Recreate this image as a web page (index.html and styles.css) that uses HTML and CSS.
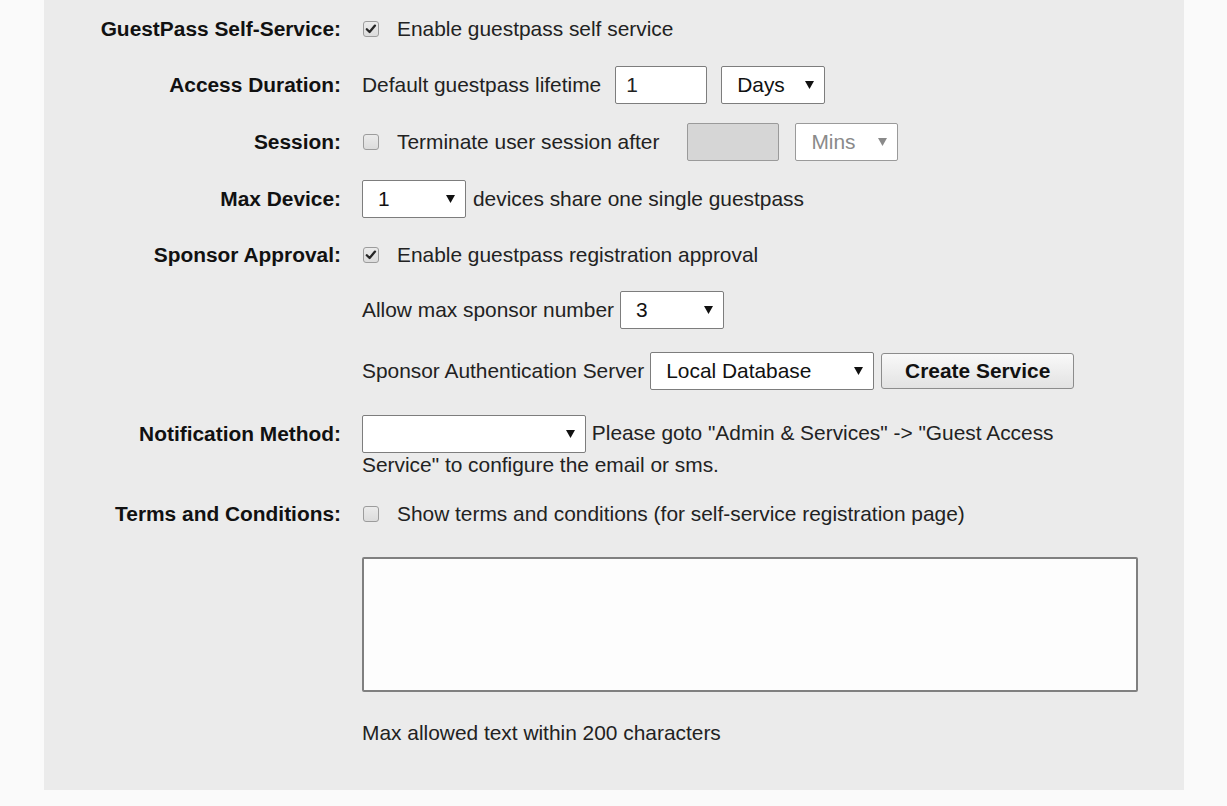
FILE: index.html
```html
<!DOCTYPE html>
<html>
<head>
<meta charset="utf-8">
<link rel="stylesheet" href="styles.css">
</head>
<body>
<div class="panel">
  <div class="row r1">
    <div class="label">GuestPass Self-Service:</div>
    <div class="ctrl">
      <span class="cb checked"><svg viewBox="0 0 16 16" width="16" height="16"><path d="M3.8 8.2 L6.6 11 L12 4.6" fill="none" stroke="#262626" stroke-width="2.3" stroke-linejoin="round" stroke-linecap="round"/></svg></span>
      <span class="cbtext">Enable guestpass self service</span>
    </div>
  </div>

  <div class="row r2">
    <div class="label">Access Duration:</div>
    <div class="ctrl">
      <span>Default guestpass lifetime</span>
      <span class="input w92 ml14">1</span>
      <span class="select w104 ml14"><span>Days</span><svg class="arr" viewBox="0 0 9 8" width="9" height="8"><path d="M0 0 H9 L4.5 8 Z" fill="#111"/></svg></span>
    </div>
  </div>

  <div class="row r3">
    <div class="label">Session:</div>
    <div class="ctrl">
      <span class="cb"></span>
      <span class="cbtext">Terminate user session after</span>
      <span class="input w92 disabled ml29"></span>
      <span class="select w103 dis ml16"><span>Mins</span><svg class="arr" viewBox="0 0 9 8" width="9" height="8"><path d="M0 0 H9 L4.5 8 Z" fill="#8a8a8a"/></svg></span>
    </div>
  </div>

  <div class="row r4">
    <div class="label">Max Device:</div>
    <div class="ctrl">
      <span class="select w104"><span>1</span><svg class="arr" viewBox="0 0 9 8" width="9" height="8"><path d="M0 0 H9 L4.5 8 Z" fill="#111"/></svg></span>
      <span class="ml7">devices share one single guestpass</span>
    </div>
  </div>

  <div class="row r5">
    <div class="label">Sponsor Approval:</div>
    <div class="ctrl">
      <span class="cb checked"><svg viewBox="0 0 16 16" width="16" height="16"><path d="M3.8 8.2 L6.6 11 L12 4.6" fill="none" stroke="#262626" stroke-width="2.3" stroke-linejoin="round" stroke-linecap="round"/></svg></span>
      <span class="cbtext">Enable guestpass registration approval</span>
    </div>
  </div>

  <div class="row r6">
    <div class="label"></div>
    <div class="ctrl">
      <span>Allow max sponsor number</span>
      <span class="select w104 ml6"><span>3</span><svg class="arr" viewBox="0 0 9 8" width="9" height="8"><path d="M0 0 H9 L4.5 8 Z" fill="#111"/></svg></span>
    </div>
  </div>

  <div class="row r7">
    <div class="label"></div>
    <div class="ctrl">
      <span>Sponsor Authentication Server</span>
      <span class="select w224 ml6"><span>Local Database</span><svg class="arr" viewBox="0 0 9 8" width="9" height="8"><path d="M0 0 H9 L4.5 8 Z" fill="#111"/></svg></span>
      <span class="button ml7">Create Service</span>
    </div>
  </div>

  <div class="row r8 top">
    <div class="label lh38">Notification Method:</div>
    <div class="flow"><span class="select w224 inl"><span></span><svg class="arr" viewBox="0 0 9 8" width="9" height="8"><path d="M0 0 H9 L4.5 8 Z" fill="#111"/></svg></span> Please goto "Admin &amp; Services" -&gt; "Guest Access Service" to configure the email or sms.</div>
  </div>

  <div class="row r9">
    <div class="label">Terms and Conditions:</div>
    <div class="ctrl">
      <span class="cb"></span>
      <span class="cbtext">Show terms and conditions (for self-service registration page)</span>
    </div>
  </div>

  <div class="row r10">
    <div class="label"></div>
    <div class="textarea"></div>
  </div>

  <div class="row r11">
    <div class="label"></div>
    <div class="note">Max allowed text within 200 characters</div>
  </div>
</div>
</body>
</html>
```

FILE: styles.css
```css
html, body {
  margin: 0;
  padding: 0;
  background: #fafafa;
}
body {
  font-family: "Liberation Sans", Arial, sans-serif;
  font-size: 20.9px;
  color: #222;
}
.panel {
  width: 1140px;
  margin-left: 44px;
  background: #ebebeb;
  padding-top: 10px;
  padding-bottom: 38px;
  box-sizing: border-box;
}
.row {
  display: grid;
  grid-template-columns: 297px 776px;
  column-gap: 21px;
  align-items: center;
  min-height: 38px;
}
.row.top { align-items: start; }
.label {
  text-align: right;
  font-weight: bold;
  color: #111;
  white-space: nowrap;
}
.lh38 { line-height: 38px; }
.ctrl {
  display: flex;
  align-items: center;
  white-space: nowrap;
}
.r2 { margin-top: 18px; }
.r3 { margin-top: 19px; }
.r4 { margin-top: 19px; }
.r5 { margin-top: 18px; }
.r6 { margin-top: 17px; }
.r7 { margin-top: 23px; }
.r8 { margin-top: 25px; }
.r9 { margin-top: 18px; }
.r10 { margin-top: 24px; }
.r11 { margin-top: 22px; }

.cb {
  width: 16px;
  height: 16px;
  box-sizing: border-box;
  margin-left: 1px;
  border: 1px solid #9c9c9c;
  border-radius: 3px;
  background: linear-gradient(#ebebeb, #dcdcdc);
  display: inline-flex;
  position: relative;
}
.cb svg { position: absolute; left: -1px; top: -1px; }
.cbtext { margin-left: 18px; }

.input {
  display: inline-flex;
  align-items: center;
  height: 38px;
  box-sizing: border-box;
  border: 1px solid #7d7d7d;
  border-radius: 2px;
  background: #fff;
  padding-left: 10px;
}
.input.disabled {
  background: #d6d6d6;
  border-color: #9a9a9a;
}
.select {
  display: inline-flex;
  align-items: center;
  justify-content: space-between;
  height: 38px;
  box-sizing: border-box;
  border: 1px solid #7d7d7d;
  border-radius: 2px;
  background: #fff;
  padding-left: 15px;
  padding-right: 10px;
  color: #111;
}
.select.dis {
  color: #8a8a8a;
  border-color: #9a9a9a;
}
.select.inl {
  vertical-align: middle;
}
.arr { flex: none; }
.w92 { width: 92px; }
.w103 { width: 103px; }
.w104 { width: 104px; }
.w224 { width: 224px; }
.ml6 { margin-left: 6px; }
.ml7 { margin-left: 7px; }
.ml14 { margin-left: 14px; }
.ml16 { margin-left: 16px; }
.ml29 { margin-left: 28px; }

.button {
  display: inline-flex;
  align-items: center;
  justify-content: center;
  width: 193px;
  height: 36px;
  box-sizing: border-box;
  border: 1px solid #8c8c8c;
  border-radius: 3px;
  background: linear-gradient(#f9f9f9, #e2e2e2);
  font-weight: bold;
  color: #111;
}
.flow {
  line-height: normal;
  padding-right: 40px;
}
.textarea {
  height: 135px;
  box-sizing: border-box;
  border: 2px solid #808080;
  border-radius: 2px;
  background: #fdfdfd;
}
.note { line-height: 24px; }
```
